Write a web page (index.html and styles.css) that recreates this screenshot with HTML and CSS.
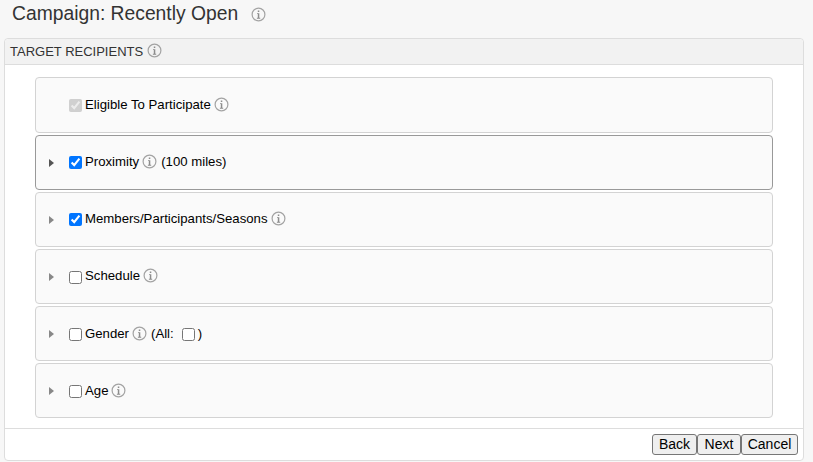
FILE: index.html
```html
<!DOCTYPE html>
<html lang="en">
<head>
    <meta charset="UTF-8">
    <title>Campaign: Recently Open</title>
    <link rel="stylesheet" href="styles.css">
</head>
<body>
    <svg class="defs" width="0" height="0" aria-hidden="true">
        <symbol id="info" viewBox="0 0 15 15">
            <circle cx="7.5" cy="7.5" r="6.4" fill="none" stroke="#a3a3a3" stroke-width="1.2"/>
            <path d="M6.8 3.4h1.5v1.6H6.8zM6 6.2h2.3v4.6h.9v.9H5.9v-.9h.9V7.1H6z" fill="#8c8c8c"/>
        </symbol>
    </svg>

    <h1 class="title">Campaign: Recently Open <svg class="info info-title"><use href="#info"/></svg></h1>

    <div class="panel">
        <div class="panel-head">TARGET RECIPIENTS <svg class="info"><use href="#info"/></svg></div>
        <div class="rows">
            <div class="row row-raised">
                <span class="arrow arrow-none"></span>
                <input type="checkbox" checked disabled>
                <span class="label">Eligible To Participate</span>
                <svg class="info"><use href="#info"/></svg>
            </div>
            <div class="row row-raised row-active">
                <span class="arrow arrow-dark"></span>
                <input type="checkbox" checked>
                <span class="label">Proximity</span>
                <svg class="info"><use href="#info"/></svg>
                <span class="note">(100 miles)</span>
            </div>
            <div class="row row-raised">
                <span class="arrow"></span>
                <input type="checkbox" checked>
                <span class="label">Members/Participants/Seasons</span>
                <svg class="info"><use href="#info"/></svg>
            </div>
            <div class="row row-raised">
                <span class="arrow"></span>
                <input type="checkbox">
                <span class="label">Schedule</span>
                <svg class="info"><use href="#info"/></svg>
            </div>
            <div class="row">
                <span class="arrow"></span>
                <input type="checkbox">
                <span class="label">Gender</span>
                <svg class="info"><use href="#info"/></svg>
                <span class="note">(All:</span>
                <input type="checkbox" class="all-check">
                <span class="close-paren">)</span>
            </div>
            <div class="row">
                <span class="arrow"></span>
                <input type="checkbox">
                <span class="label">Age</span>
                <svg class="info"><use href="#info"/></svg>
            </div>
        </div>
        <div class="panel-foot">
            <button class="btn btn-back">Back</button><button class="btn btn-next">Next</button><button class="btn btn-cancel">Cancel</button>
        </div>
    </div>
</body>
</html>
```

FILE: styles.css
```css
body {
    margin: 0;
    background: #f7f7f7;
    font-family: "Liberation Sans", Arial, sans-serif;
    font-size: 13.2px;
    color: #000;
}
.defs { display: block; height: 0; }
.title {
    margin: 0;
    padding: 2px 0 0 12px;
    height: 36px;
    box-sizing: border-box;
    font-size: 19.3px;
    line-height: 24px;
    font-weight: normal;
    color: #333;
}
.info {
    width: 15px;
    height: 15px;
    flex: none;
    vertical-align: -2px;
}
.info-title { margin-left: 7px; }
.panel {
    margin: 2px 9px 0 4px;
    height: 423px;
    box-sizing: border-box;
    background: #fff;
    border: 1px solid #ddd;
    border-radius: 4px;
    display: flex;
    flex-direction: column;
}
.panel-head {
    height: 26px;
    box-sizing: border-box;
    padding: 4px 0 0 5px;
    background: #f2f2f2;
    border-bottom: 1px solid #ddd;
    border-radius: 4px 4px 0 0;
    font-size: 13px;
    line-height: 15px;
    color: #333;
}
.rows {
    padding: 12px 30px 10px;
    display: flex;
    flex-direction: column;
    gap: 2px;
    border-bottom: 1px solid #ddd;
}
.row {
    height: 55px;
    box-sizing: border-box;
    background: #fafafa;
    border: 1px solid #d3d3d3;
    border-radius: 4px;
    display: flex;
    align-items: center;
    padding-left: 13px;
}
.row:first-child { height: 56px; }
.row-active { border-color: #999; }
.row-raised .label,
.row-raised .info,
.row-raised .note { margin-bottom: 2px; }
.arrow {
    width: 0;
    height: 0;
    margin-right: 15px;
    border-style: solid;
    border-width: 4px 0 4px 5px;
    border-color: transparent transparent transparent #888;
}
.arrow-dark { border-left-color: #555; }
.arrow-none { border-left-color: transparent; }
.row input {
    width: 13px;
    height: 13px;
    margin: 1px 3px 0 0;
}
.row input:checked:enabled { margin-top: -1px; }
.label {
    margin-right: 3px;
    line-height: 15px;
}
.note { margin-left: 4px; }
.row .all-check { margin: 1px 0 0 8px; }
.close-paren { margin-left: 3px; }
.panel-foot {
    flex: 1;
    display: flex;
    justify-content: flex-end;
    padding: 5px 5px 0 0;
    align-items: flex-start;
}
.btn {
    height: 21px;
    padding: 0;
    margin: 0;
    background: #efefef;
    border: 1px solid #767676;
    border-radius: 3px;
    font-family: "Liberation Sans", Arial, sans-serif;
    font-size: 14px;
    line-height: 17px;
    color: #000;
}
.btn-back { width: 45px; }
.btn-next { width: 44px; }
.btn-cancel { width: 57px; }
```
